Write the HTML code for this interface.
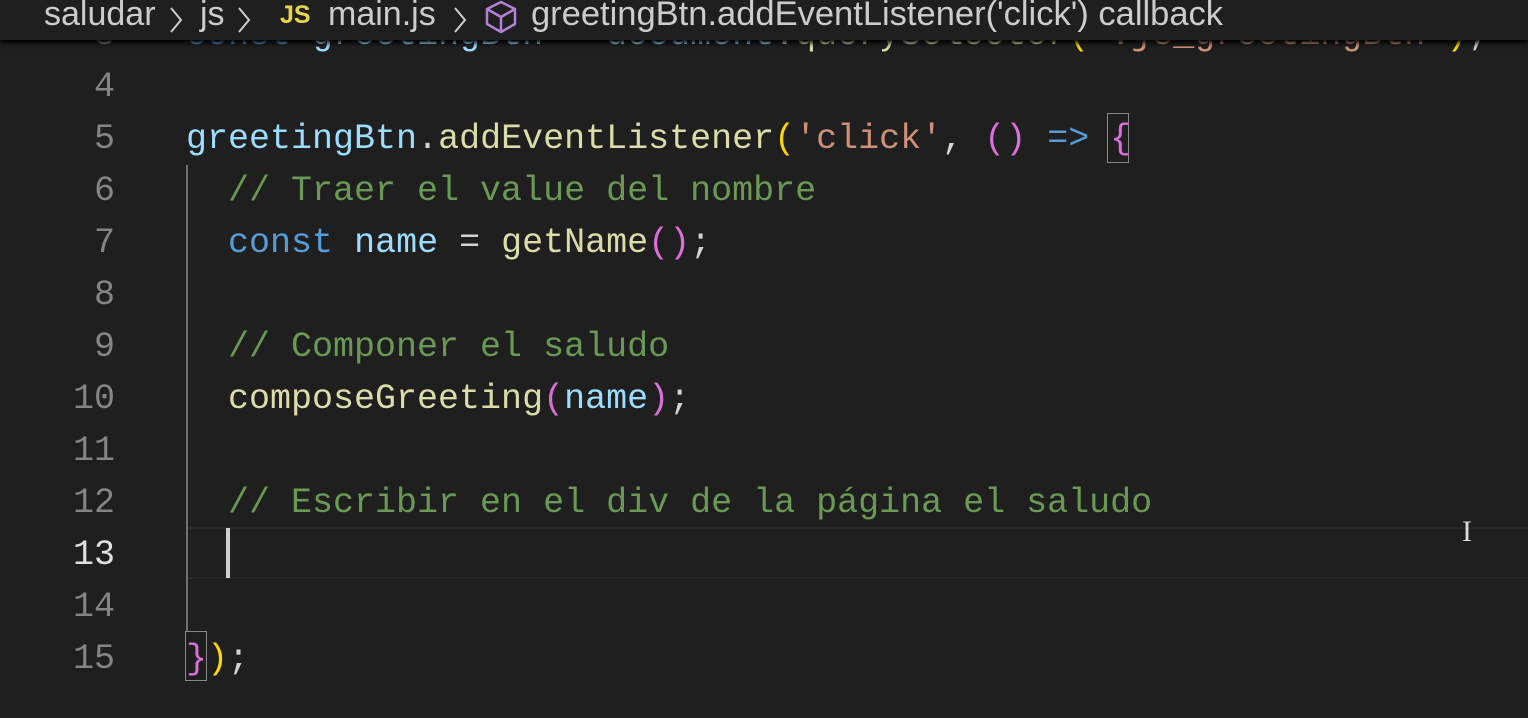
<!DOCTYPE html>
<html><head><meta charset="utf-8"><style>
html,body{margin:0;padding:0;background:#1f1f1f;width:1528px;height:718px;overflow:hidden}
.code{position:absolute;left:0;top:0;width:1528px;height:718px;font-family:"Liberation Mono",monospace;font-size:35px;}
.ln{position:absolute;left:0;width:115px;text-align:right;color:#858585;height:52px;line-height:52px}
.l{position:absolute;left:186px;height:52px;line-height:52px;white-space:pre;color:#d4d4d4}
.k{color:#569cd6}.v{color:#9cdcfe}.f{color:#dcdcaa}.s{color:#ce9178}.c{color:#6a9955}
.y{color:#ffd700}.p{color:#da70d6}.b{color:#179fff}
.bc{position:absolute;left:0;top:0;width:1528px;height:40px;background:#1f1f1f;box-shadow:0 3px 5px #000;font-family:"Liberation Sans",sans-serif;font-size:34px;color:#cccccc;line-height:32px;white-space:pre;z-index:2}
.bc span{position:absolute;top:-2px}
.ch{position:absolute;top:6px}
</style></head><body>
<div class="code">
<div style="position:absolute;left:186px;top:527px;width:1342px;height:48px;border-top:2px solid #282828;border-bottom:2px solid #282828"></div>
<div style="position:absolute;left:186px;top:165px;width:2px;height:466px;background:#707070"></div>
<div style="position:absolute;left:226px;top:528px;width:4px;height:50px;background:#d0d0d0"></div>
<div style="position:absolute;left:1107px;top:113px;width:20px;height:48px;border:1px solid #888"></div>
<div style="position:absolute;left:185px;top:631px;width:20px;height:48px;border:1px solid #888"></div>

<div class="ln" style="top:9px">3</div><div class="l" style="top:9px"><span class="k">const</span> <span class="v">greetingBtn</span> = <span class="v">document</span>.<span class="f">querySelector</span><span class="y">(</span><span class="s">'.js_greetingBtn'</span><span class="y">)</span>;</div>
<div class="ln" style="top:61px">4</div>
<div class="ln" style="top:113px">5</div><div class="l" style="top:113px"><span class="v">greetingBtn</span>.<span class="f">addEventListener</span><span class="y">(</span><span class="s">'click'</span>, <span class="p">()</span> <span class="k">=&gt;</span> <span class="p">{</span></div>
<div class="ln" style="top:165px">6</div><div class="l" style="top:165px">  <span class="c">// Traer el value del nombre</span></div>
<div class="ln" style="top:217px">7</div><div class="l" style="top:217px">  <span class="k">const</span> <span class="v">name</span> = <span class="f">getName</span><span class="p">()</span>;</div>
<div class="ln" style="top:269px">8</div>
<div class="ln" style="top:321px">9</div><div class="l" style="top:321px">  <span class="c">// Componer el saludo</span></div>
<div class="ln" style="top:373px">10</div><div class="l" style="top:373px">  <span class="f">composeGreeting</span><span class="p">(</span><span class="v">name</span><span class="p">)</span>;</div>
<div class="ln" style="top:425px">11</div>
<div class="ln" style="top:477px">12</div><div class="l" style="top:477px">  <span class="c">// Escribir en el div de la página el saludo</span></div>
<div class="ln" style="top:529px;color:#e0e0e0">13</div>
<div class="ln" style="top:581px">14</div>
<div class="ln" style="top:633px">15</div><div class="l" style="top:633px"><span class="p">}</span><span class="y">)</span>;</div>
</div>
<div class="bc"><span style="left:44px">saludar</span>
<svg class="ch" style="left:168px" width="16" height="28" viewBox="0 0 16 28"><path d="M3 2 L13 14 L3 26" fill="none" stroke="#ccc" stroke-width="2"/></svg>
<span style="left:200px">js</span>
<svg class="ch" style="left:236px" width="16" height="28" viewBox="0 0 16 28"><path d="M3 2 L13 14 L3 26" fill="none" stroke="#ccc" stroke-width="2"/></svg>
<span style="left:280px;top:-1px;color:#e8d44d;font-weight:bold;font-size:25px">JS</span>
<span style="left:328px">main.js</span>
<svg class="ch" style="left:452px" width="16" height="28" viewBox="0 0 16 28"><path d="M3 2 L13 14 L3 26" fill="none" stroke="#ccc" stroke-width="2"/></svg>
<svg style="position:absolute;left:483px;top:0" width="36" height="34" viewBox="0 0 36 34"><path d="M18 2 L32 9 L32 24 L18 32 L4 24 L4 9 Z M4 9 L18 17 L32 9 M18 17 L18 32" fill="none" stroke="#b180d7" stroke-width="2.5" stroke-linejoin="round"/></svg>
<span style="left:531px;font-size:34.5px">greetingBtn.addEventListener('click') callback</span></div>
<div style="position:absolute;left:1462px;top:517px;color:#ddd;font-family:'Liberation Serif',serif;font-size:30px;line-height:30px">I</div>
</body></html>
